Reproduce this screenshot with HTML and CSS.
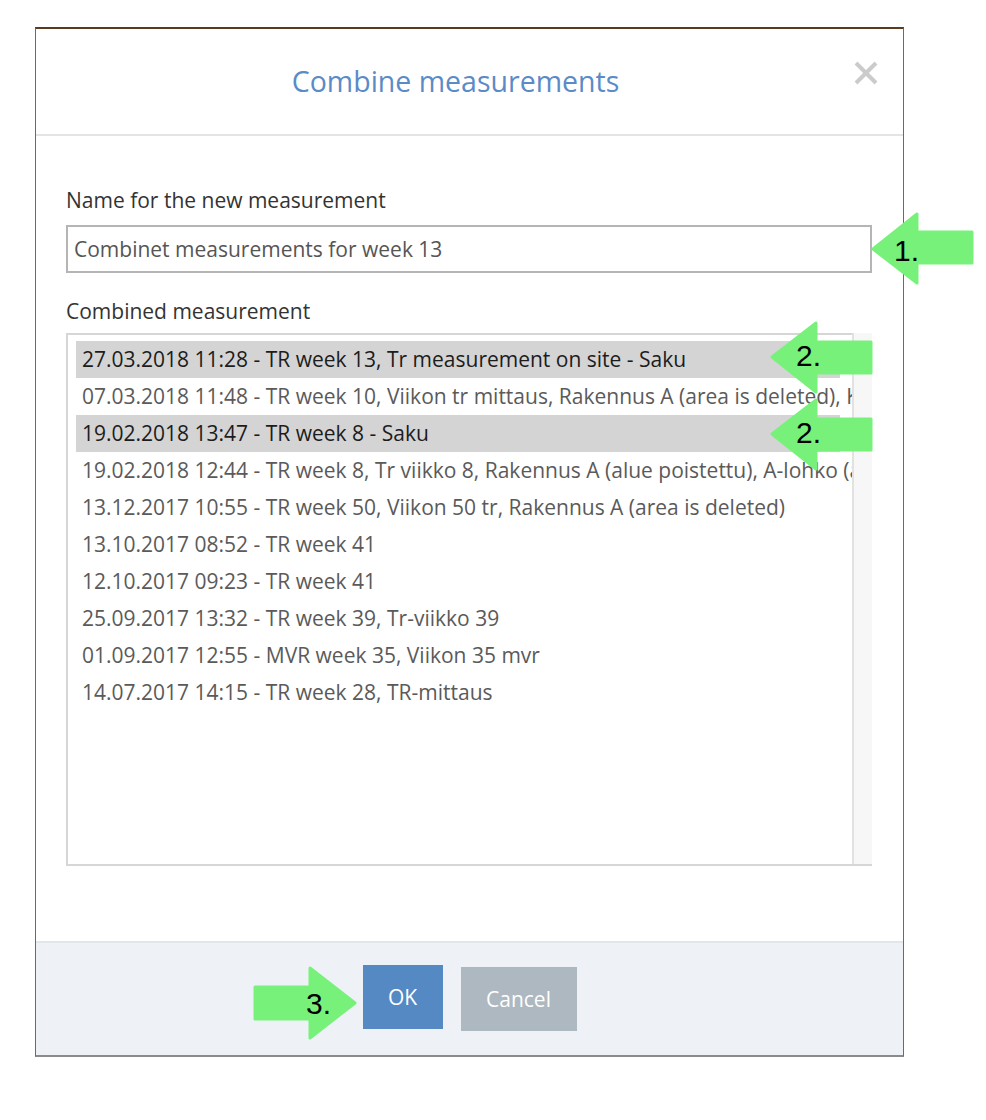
FILE: index.html
```html
<html>
<head>
    <title>Combine measurements</title>
    <link rel="stylesheet" href="styles.css">
</head>
<body>
<div class="page">
    <div class="dialog">
        <div class="dialog-header">
            <h2 class="title">Combine measurements</h2>
            <button class="close" title="Close">
                <svg width="24" height="24" viewBox="0 0 24 24">
                    <path d="M2 2 L22 22 M22 2 L2 22" stroke="#cbcbcb" stroke-width="4" fill="none"/>
                </svg>
            </button>
        </div>

        <div class="dialog-body">
            <label class="field-label" for="name">Name for the new measurement</label>
            <input id="name" class="name-input" type="text" value="Combinet measurements for week 13">

            <div class="field-label list-label">Combined measurement</div>
            <div class="list">
                <div class="options">
                    <div class="option selected">27.03.2018 11:28 - TR week 13, Tr measurement on site - Saku</div>
                    <div class="option">07.03.2018 11:48 - TR week 10, Viikon tr mittaus, Rakennus A (area is deleted), Kerros 2</div>
                    <div class="option selected">19.02.2018 13:47 - TR week 8 - Saku</div>
                    <div class="option">19.02.2018 12:44 - TR week 8, Tr viikko 8, Rakennus A (alue poistettu), A-lohko (alue poistettu)</div>
                    <div class="option">13.12.2017 10:55 - TR week 50, Viikon 50 tr, Rakennus A (area is deleted)</div>
                    <div class="option">13.10.2017 08:52 - TR week 41</div>
                    <div class="option">12.10.2017 09:23 - TR week 41</div>
                    <div class="option">25.09.2017 13:32 - TR week 39, Tr-viikko 39</div>
                    <div class="option">01.09.2017 12:55 - MVR week 35, Viikon 35 mvr</div>
                    <div class="option">14.07.2017 14:15 - TR week 28, TR-mittaus</div>
                </div>
                <div class="scrollbar"></div>
            </div>
        </div>

        <div class="dialog-footer">
            <button class="btn btn-ok">OK</button>
            <button class="btn btn-cancel">Cancel</button>
        </div>
    </div>

    <!-- numbered step markers -->
    <svg class="marker marker-1" width="104" height="73" viewBox="0 0 104 73">
        <polygon points="2,37 46,2 46,20 101,20 101,51 46,51 46,71" fill="#78f17b" stroke="#78f17b" stroke-width="3" stroke-linejoin="round"/>
        <text x="23" y="49" class="marker-num">1.</text>
    </svg>
    <svg class="marker marker-2a" width="104" height="73" viewBox="0 0 104 73">
        <polygon points="2,36 46,2 46,21 101,21 101,52 46,52 46,71" fill="#78f17b" stroke="#78f17b" stroke-width="3" stroke-linejoin="round"/>
        <text x="26" y="45" class="marker-num">2.</text>
    </svg>
    <svg class="marker marker-2b" width="104" height="73" viewBox="0 0 104 73">
        <polygon points="2,36 46,2 46,21 101,21 101,52 46,52 46,71" fill="#78f17b" stroke="#78f17b" stroke-width="3" stroke-linejoin="round"/>
        <text x="26" y="45" class="marker-num">2.</text>
    </svg>
    <svg class="marker marker-3" width="104" height="74" viewBox="0 0 104 74">
        <polygon points="2,21 57,21 57,2 102,37 57,72 57,53 2,53" fill="#78f17b" stroke="#78f17b" stroke-width="3" stroke-linejoin="round"/>
        <text x="53" y="48" class="marker-num">3.</text>
    </svg>
</div>
</body>
</html>
```

FILE: styles.css
```css
body {
    margin: 0;
    background-color: #ffffff;
    font-family: 'Open Sans', 'Noto Sans', sans-serif;
}
.page {
    position: relative;
    width: 986px;
    height: 1120px;
    padding-top: 27px;
    box-sizing: border-box;
}
.dialog {
    margin-left: 35px;
    width: 869px;
    box-sizing: border-box;
    border-top: 2px solid #5b3b1f;
    border-left: 1px solid #6a6a6a;
    border-right: 1px solid #6a6a6a;
    border-bottom: 2px solid #8a8a8a;
    background-color: #ffffff;
}
.dialog-header {
    position: relative;
    height: 105px;
    border-bottom: 2px solid #e4e4e4;
    display: flex;
    align-items: center;
    justify-content: center;
}
.title {
    margin: 0 28px 2px 0;
    font-size: 28.5px;
    font-weight: normal;
    color: #5b8bc7;
}
.close {
    position: absolute;
    top: 32px;
    right: 25px;
    padding: 0;
    border: 0;
    background: none;
    width: 24px;
    height: 24px;
}
.dialog-body {
    padding: 51px 31px 75px 30px;
}
.field-label {
    display: block;
    font-size: 21px;
    line-height: 26px;
    color: #333333;
}
.name-input {
    display: block;
    width: 100%;
    height: 48px;
    margin-top: 12px;
    box-sizing: border-box;
    border: 2px solid #b5b5b5;
    padding: 0 6px;
    font-family: 'Open Sans', 'Noto Sans', sans-serif;
    font-size: 21px;
    color: #555555;
    outline: none;
}
.list-label {
    margin-top: 25px;
}
.list {
    margin-top: 9px;
    height: 533px;
    box-sizing: border-box;
    border: 2px solid #d6d6d6;
    border-right: 0;
    display: flex;
}
.options {
    flex: 1;
    overflow: hidden;
    padding: 6px 0 0 8px;
}
.option {
    width: 758px;
    height: 37px;
    line-height: 37px;
    padding-left: 6px;
    white-space: nowrap;
    font-size: 21px;
    color: #5a5a5a;
}
.option.selected {
    background-color: #d4d4d4;
    color: #1c1c1c;
}
.scrollbar {
    width: 18px;
    background-color: #f7f7f7;
    border-left: 2px solid #e2e2e2;
    margin-top: -2px;
}
.dialog-footer {
    height: 114px;
    border-top: 2px solid #e1e6eb;
    background-color: #eef2f7;
    display: flex;
    justify-content: center;
    align-items: flex-start;
    gap: 18px;
    padding-top: 22px;
    box-sizing: border-box;
}
.btn {
    height: 64px;
    border: 0;
    font-family: 'Open Sans', 'Noto Sans', sans-serif;
    font-size: 21px;
    color: #ffffff;
}
.btn-ok {
    width: 80px;
    background-color: #5589c4;
}
.btn-cancel {
    width: 116px;
    margin-top: 2px;
    background-color: #adb8c0;
}
.marker {
    position: absolute;
}
.marker-num {
    font-family: 'Liberation Sans', Arial, sans-serif;
    font-size: 30px;
    fill: #000000;
}
.marker-1 {
    left: 871px;
    top: 212px;
}
.marker-2a {
    left: 770px;
    top: 321px;
}
.marker-2b {
    left: 770px;
    top: 398px;
}
.marker-3 {
    left: 253px;
    top: 966px;
}
```
